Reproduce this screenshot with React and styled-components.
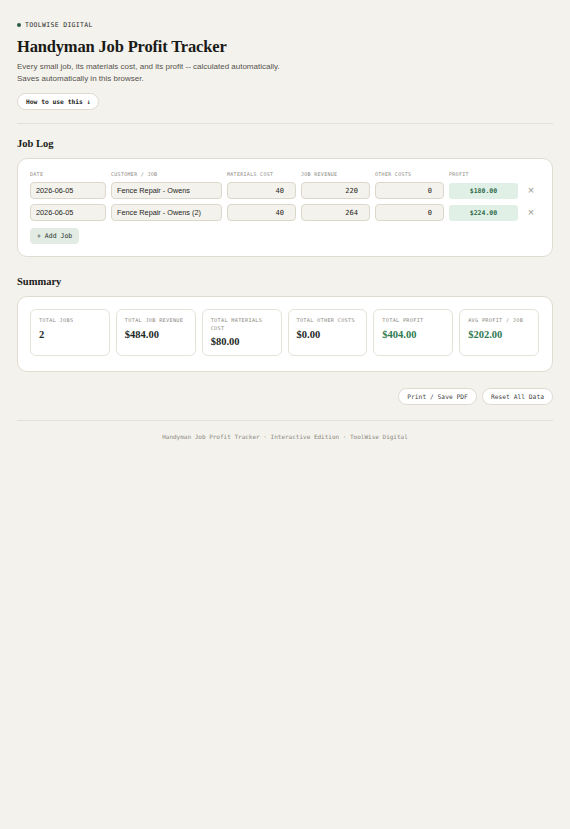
import React, { useState } from "react";
import styled, { createGlobalStyle } from "styled-components";

const GlobalStyle = createGlobalStyle`
  html, body {
    margin: 0;
    padding: 0;
    background: #f4f2ec;
  }
  * {
    box-sizing: border-box;
  }
`;

const mono = `"DejaVu Sans Mono", "Liberation Mono", monospace`;
const serif = `"Liberation Serif", "Times New Roman", serif`;
const sans = `"Liberation Sans", Arial, sans-serif`;

const money = (n) => "$" + n.toFixed(2);

const App = () => {
  const [jobs, setJobs] = useState([
    { id: 1, date: "2026-06-05", customer: "Fence Repair - Owens", materials: 40, revenue: 220, other: 0 },
    { id: 2, date: "2026-06-05", customer: "Fence Repair - Owens (2)", materials: 40, revenue: 264, other: 0 },
  ]);

  const update = (id, key, value) => {
    setJobs(jobs.map((j) => (j.id === id ? { ...j, [key]: value } : j)));
  };

  const addJob = () => {
    setJobs([
      ...jobs,
      { id: Date.now(), date: "2026-06-05", customer: "", materials: 0, revenue: 0, other: 0 },
    ]);
  };

  const removeJob = (id) => setJobs(jobs.filter((j) => j.id !== id));

  const profitOf = (j) => Number(j.revenue) - Number(j.materials) - Number(j.other);
  const totalRevenue = jobs.reduce((s, j) => s + Number(j.revenue), 0);
  const totalMaterials = jobs.reduce((s, j) => s + Number(j.materials), 0);
  const totalOther = jobs.reduce((s, j) => s + Number(j.other), 0);
  const totalProfit = jobs.reduce((s, j) => s + profitOf(j), 0);
  const avgProfit = jobs.length ? totalProfit / jobs.length : 0;

  const stats = [
    { label: "Total Jobs", value: String(jobs.length) },
    { label: "Total Job Revenue", value: money(totalRevenue) },
    { label: "Total Materials Cost", value: money(totalMaterials) },
    { label: "Total Other Costs", value: money(totalOther) },
    { label: "Total Profit", value: money(totalProfit), good: true },
    { label: "Avg Profit / Job", value: money(avgProfit), good: true },
  ];

  return (
    <Page>
      <GlobalStyle />
      <Eyebrow>
        <Dot />
        ToolWise Digital
      </Eyebrow>
      <Title>Handyman Job Profit Tracker</Title>
      <Intro>
        Every small job, its materials cost, and its profit -- calculated automatically.
        <br />
        Saves automatically in this browser.
      </Intro>
      <PillButton $bold>How to use this ↓</PillButton>

      <Rule />

      <SectionTitle>Job Log</SectionTitle>
      <Card>
        <JobGrid>
          <ColLabel>Date</ColLabel>
          <ColLabel>Customer / Job</ColLabel>
          <ColLabel>Materials Cost</ColLabel>
          <ColLabel>Job Revenue</ColLabel>
          <ColLabel>Other Costs</ColLabel>
          <ColLabel>Profit</ColLabel>
          <span />
          {jobs.map((j) => (
            <React.Fragment key={j.id}>
              <Field value={j.date} onChange={(e) => update(j.id, "date", e.target.value)} />
              <Field value={j.customer} onChange={(e) => update(j.id, "customer", e.target.value)} />
              <Field $num value={j.materials} onChange={(e) => update(j.id, "materials", e.target.value)} />
              <Field $num value={j.revenue} onChange={(e) => update(j.id, "revenue", e.target.value)} />
              <Field $num value={j.other} onChange={(e) => update(j.id, "other", e.target.value)} />
              <Profit>{money(profitOf(j))}</Profit>
              <Remove onClick={() => removeJob(j.id)}>×</Remove>
            </React.Fragment>
          ))}
        </JobGrid>
        <AddButton onClick={addJob}>+ Add Job</AddButton>
      </Card>

      <SectionTitle>Summary</SectionTitle>
      <SummaryCard>
        <StatGrid>
          {stats.map((s) => (
            <Stat key={s.label}>
              <StatLabel>{s.label}</StatLabel>
              <StatValue $good={s.good}>{s.value}</StatValue>
            </Stat>
          ))}
        </StatGrid>
      </SummaryCard>

      <Actions>
        <PillButton onClick={() => window.print()}>Print / Save PDF</PillButton>
        <PillButton onClick={() => setJobs([])}>Reset All Data</PillButton>
      </Actions>

      <Rule $tight />

      <Footer>Handyman Job Profit Tracker · Interactive Edition · ToolWise Digital</Footer>
    </Page>
  );
};

const Page = styled.div`
  padding: 20px 17px 40px;
  color: #1c1c1a;
  min-height: 829px;
`;

const Eyebrow = styled.div`
  display: flex;
  align-items: center;
  gap: 4px;
  height: 10px;
  font-family: ${mono};
  font-size: 6.5px;
  letter-spacing: 0.05em;
  text-transform: uppercase;
  color: #2a2a28;
`;

const Dot = styled.span`
  width: 4px;
  height: 4px;
  border-radius: 50%;
  background: #2d5a44;
`;

const Title = styled.h1`
  margin: 7px 0 0;
  font-family: ${serif};
  font-size: 16.5px;
  line-height: 19px;
  font-weight: 700;
  letter-spacing: -0.01em;
  color: #1a1a18;
`;

const Intro = styled.p`
  margin: 5px 0 0;
  font-family: ${sans};
  font-size: 8px;
  line-height: 11.5px;
  color: #55534e;
`;

const PillButton = styled.button`
  display: inline-flex;
  align-items: center;
  height: 17px;
  padding: 0 8px;
  margin-top: ${(p) => (p.$bold ? "9px" : "0")};
  border: 1px solid #dedad0;
  border-radius: 9px;
  background: #fff;
  font-family: ${mono};
  font-size: 6.3px;
  font-weight: ${(p) => (p.$bold ? 700 : 400)};
  color: ${(p) => (p.$bold ? "#1c1c1a" : "#444")};
  cursor: pointer;
`;

const Rule = styled.hr`
  margin: ${(p) => (p.$tight ? "15px 0 0" : "13px 0 0")};
  border: 0;
  border-top: 1px solid #e2dfd6;
`;

const SectionTitle = styled.h2`
  margin: 13px 0 8px;
  font-family: ${serif};
  font-size: 10.5px;
  line-height: 13px;
  font-weight: 700;
  color: #1a1a18;
`;

const Card = styled.div`
  padding: 11px 13px 12px 12px;
  background: #fff;
  border: 1px solid #e0dcd1;
  border-radius: 10px;
  margin-bottom: 18px;
`;

const JobGrid = styled.div`
  display: grid;
  grid-template-columns: 76px 111px repeat(4, 1fr) 16px;
  column-gap: 5px;
  row-gap: 5px;
  align-items: center;
`;

const ColLabel = styled.div`
  font-family: ${mono};
  font-size: 5px;
  letter-spacing: 0.06em;
  line-height: 8px;
  text-transform: uppercase;
  color: #8c8a84;
  margin-bottom: -1px;
`;

const Field = styled.input`
  width: 100%;
  min-width: 0;
  height: 17px;
  padding: 0 ${(p) => (p.$num ? "11px" : "5px")} 0 5px;
  border: 1px solid #dbd7cb;
  border-radius: 4px;
  background: #f4f2ec;
  font-family: ${(p) => (p.$num ? mono : sans)};
  font-size: ${(p) => (p.$num ? "7px" : "7.3px")};
  text-align: ${(p) => (p.$num ? "right" : "left")};
  color: #1f1f1d;
  outline: none;
`;

const Profit = styled.div`
  height: 16px;
  display: flex;
  align-items: center;
  justify-content: center;
  border-radius: 3px;
  background: #e1f0e6;
  font-family: ${mono};
  font-size: 6.5px;
  font-weight: 700;
  color: #2e6b4b;
`;

const Remove = styled.button`
  padding: 0;
  border: 0;
  background: none;
  font-family: ${sans};
  font-size: 11px;
  line-height: 1;
  color: #9a9891;
  cursor: pointer;
`;

const AddButton = styled.button`
  margin-top: 7px;
  height: 16px;
  padding: 0 7px;
  border: 0;
  border-radius: 4px;
  background: #e3ebe5;
  font-family: ${mono};
  font-size: 6.5px;
  color: #2a3a31;
  cursor: pointer;
`;

const SummaryCard = styled(Card)`
  padding: 12px 13px 15px 12px;
  margin-bottom: 16px;
`;

const StatGrid = styled.div`
  display: grid;
  grid-template-columns: repeat(6, 1fr);
  gap: 6px;
`;

const Stat = styled.div`
  height: 47px;
  padding: 7px 8px 0;
  border: 1px solid #e6e2d9;
  border-radius: 6px;
  background: #fff;
`;

const StatLabel = styled.div`
  font-family: ${mono};
  font-size: 5.2px;
  line-height: 7.7px;
  letter-spacing: 0.06em;
  text-transform: uppercase;
  color: #8c8a84;
`;

const StatValue = styled.div`
  margin-top: 3px;
  font-family: ${serif};
  font-size: 10.5px;
  line-height: 13px;
  font-weight: 700;
  color: ${(p) => (p.$good ? "#2f7a50" : "#1d2a25")};
`;

const Actions = styled.div`
  display: flex;
  justify-content: flex-end;
  gap: 5px;
`;

const Footer = styled.div`
  margin-top: 12px;
  text-align: center;
  font-family: ${mono};
  font-size: 6px;
  line-height: 8px;
  color: #8c8a84;
`;

export default App;
